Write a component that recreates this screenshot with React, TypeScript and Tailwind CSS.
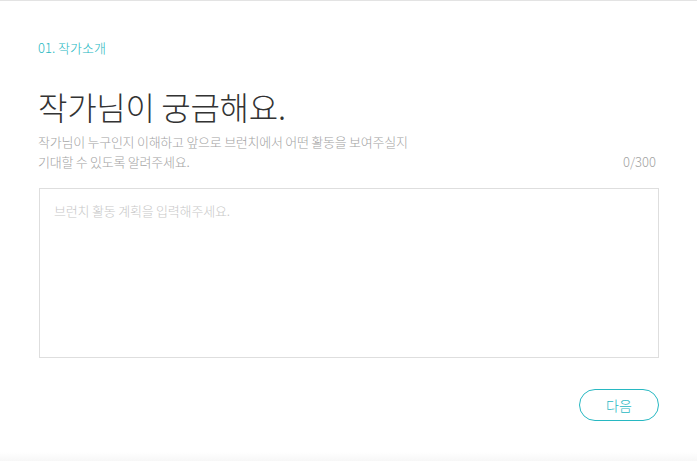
export default function App() {
  return (
    <div
      className="w-[697px] h-[461px] bg-white border-t border-[#e3e3e3] flex flex-col"
      style={{ fontFamily: '"Noto Sans CJK KR", "Noto Sans", sans-serif' }}
    >
      <div className="flex-1 px-[38px] pt-[37px]">
        <p className="text-[13px] leading-[20px] text-[#27b8c2] font-light">01. 작가소개</p>
        <h1 className="mt-[28px] text-[32px] leading-[40px] text-[#333] font-extralight tracking-[-0.3px]">
          작가님이 궁금해요.
        </h1>
        <div className="mt-[6px] flex items-end justify-between">
          <p className="text-[13px] leading-[20px] text-[#a3a3a3] font-light tracking-[-0.25px]">
            작가님이 누구인지 이해하고 앞으로 브런치에서 어떤 활동을 보여주실지
            <br />
            기대할 수 있도록 알려주세요.
          </p>
          <span className="text-[13px] leading-[20px] text-[#a3a3a3] font-light pr-[3px]">0/300</span>
        </div>
        <div className="mt-[16px] ml-px h-[170px] border border-[#dedede] px-[14px] py-[12px]">
          <p className="text-[13px] leading-[20px] text-[#c8c8c8] font-light tracking-[-0.2px]">
            브런치 활동 계획을 입력해주세요.
          </p>
        </div>
        <div className="mt-[31px] flex justify-end">
          <button className="w-[80px] h-[32px] rounded-full border border-[#27b8c2] text-[14px] text-[#27b8c2] font-light">
            다음
          </button>
        </div>
      </div>
      <div className="h-[9px] bg-gradient-to-b from-[#ffffff] to-[#f7f7f7]" />
    </div>
  );
}
